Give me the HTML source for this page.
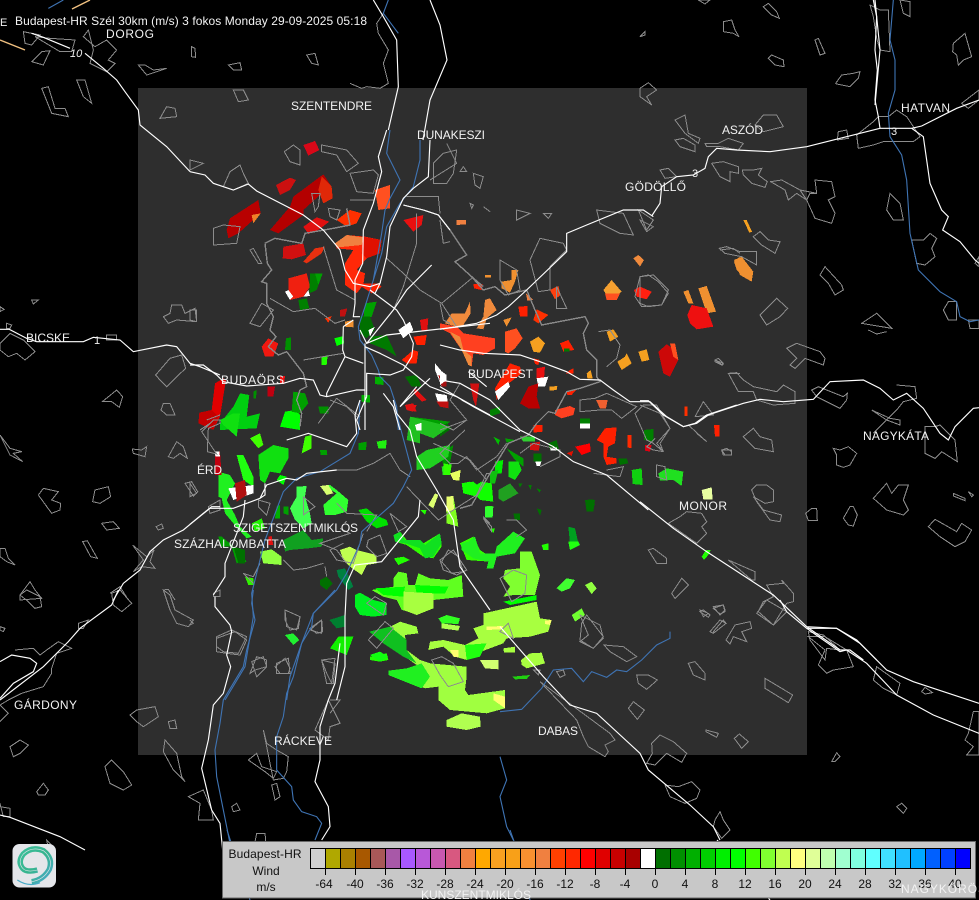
<!DOCTYPE html>
<html><head><meta charset="utf-8"><title>Budapest-HR</title>
<style>
html,body{margin:0;padding:0;background:#000;width:979px;height:900px;overflow:hidden}
svg{display:block;position:absolute;left:0;top:0}
svg *{vector-effect:non-scaling-stroke}
.g{fill:none;stroke:#8c8c8c;stroke-width:1;shape-rendering:crispEdges}
.g2{fill:none;stroke:#8a8a8a;stroke-width:1.4;shape-rendering:crispEdges}
.w{fill:none;stroke:#fff;stroke-width:1.15}
.b{fill:none;stroke:#3f74b4;stroke-width:1.1}
.r path{shape-rendering:crispEdges}
text{font-family:"Liberation Sans",sans-serif;font-size:12px;fill:#f2f2f2}
.k{fill:#111;font-size:12px}
</style></head><body>
<svg width="979" height="900" viewBox="0 0 979 900">
<rect width="979" height="900" fill="#000"/>
<rect x="138" y="88" width="669" height="667" fill="#2e2e2e"/>

<!-- radar -->
<g class="r" transform="translate(190,130) scale(.33333)">
<path fill="#d80818" d="M340 45 375 33 388 60 355 77z"/>
<path fill="#cc1010" d="M258 165 300 143 318 150 300 180 270 195z"/>
<path fill="#b40000" d="M240 300 300 230 310 200 400 133 425 170 428 205 400 220 390 195 340 240 340 255 265 310z"/>
<path fill="#e02808" d="M395 140 425 170 428 205 400 220 385 180z"/>
<path fill="#b80000" d="M120 265 205 210 212 250 145 310 115 325 110 300z"/>
<path fill="#f08028" d="M185 255 212 250 190 280z"/>
<path fill="#e01010" d="M340 290 380 262 418 275 385 300 355 312z"/>
<path fill="#ff3000" d="M440 270 480 240 515 250 500 280 470 290z"/>
<path fill="#ff5020" d="M555 180 600 165 600 235 565 240z"/>
<path fill="#e81010" d="M640 270 700 255 695 285 670 305z"/>
<path fill="#f08040" d="M800 270 828 270 828 283 800 285z"/>
<path fill="#ff2808" d="M435 340 470 315 525 320 575 330 570 370 530 385 500 420 525 430 520 465 500 490 465 465 465 400 490 360 440 355z"/>
<path fill="#e01000" d="M520 320 575 330 570 370 530 385 515 370z"/>
<path fill="#f08040" d="M435 340 470 315 520 322 515 345 445 352z"/>
<path fill="#ff2000" d="M500 460 560 460 575 470 545 490z"/>
<path fill="#d01010" d="M280 350 340 340 348 375 305 388 278 385z"/>
<path fill="#e83010" d="M340 395 375 355 405 350 395 370 350 400z"/>
<path fill="#f02010" d="M295 445 350 430 360 470 340 500 300 510 295 470z"/>
<path fill="#fff" d="M285 485 300 510 310 500 295 480zM340 500 355 480 360 498z"/>
<path fill="#008000" d="M360 430 398 430 380 480 358 490z"/>
<path fill="#00a000" d="M375 430 398 430 385 465z"/>
<path fill="#008000" d="M325 510 350 505 358 535 330 540z"/>
<path fill="#009000" d="M288 625 303 622 303 660 285 660z"/>
<path fill="#f01810" d="M215 650 235 625 265 640 250 680 225 680z"/>
<path fill="#00ff00" d="M433 625 460 618 462 640 440 648z"/>
<path fill="#20ff00" d="M395 682 413 675 410 705 395 705z"/>
<path fill="#ff3000" d="M405 565 425 558 415 578z"/>
<path fill="#c01010" d="M450 540 472 535 465 560 450 560z"/>
<path fill="#f09030" d="M465 575 490 570 490 592 465 590z"/>
<path fill="#00a000" d="M525 520 560 515 545 560 520 570z"/>
<path fill="#007000" d="M510 560 540 560 555 600 530 625 510 610z"/>
<path fill="#007a00" d="M540 620 590 615 620 680 590 660 540 640z"/>
<path fill="#fff" d="M625 600 660 575 670 600 640 625zM535 600 555 590 540 620z"/>
<path fill="#e01010" d="M690 570 715 565 712 600 695 605z"/>
<path fill="#ff2000" d="M670 620 710 615 705 645 680 645zM635 690 670 660 685 665 680 700 650 700z"/>
<path fill="#fff" d="M735 700 752 720 770 760 755 770 735 720z"/>
<path fill="#a81010" d="M745 735 770 745 770 770 755 770z"/>
<path fill="#007000" d="M645 740 680 735 695 770 665 770z"/>
<path fill="#e01010" d="M675 775 710 810 695 815 672 790z"/>
<path fill="#fff" d="M735 790 770 795 775 825 745 820z"/>
<path fill="#c01010" d="M740 815 775 815 775 835 750 830z"/>
<path fill="#e81010" d="M650 825 680 825 670 845 650 840z"/>
<path fill="#00a000" d="M660 860 780 875 750 900 660 900z"/>
<path fill="#fff" d="M675 885 700 880 695 900 675 900z"/>
<path fill="#e00000" d="M75 760 100 745 108 750 90 860 70 900 25 880 28 848 65 840z"/>
<path fill="#c40000" d="M28 848 65 840 85 860 70 900 25 880z"/>
<path fill="#c00010" d="M232 770 255 770 250 800 232 800z"/>
<path fill="#f01010" d="M270 740 285 738 282 762 270 762z"/>
<path fill="#00d010" d="M90 880 130 830 150 790 178 795 170 860 210 850 200 895 90 900z"/>
<path fill="#00ff00" d="M270 890 285 845 315 840 330 855 330 900z"/>
<path fill="#00a000" d="M310 785 345 790 355 820 330 850 305 845z"/>
<path fill="#009000" d="M385 830 415 830 415 850 390 850z"/>
<path fill="#00b000" d="M515 795 540 795 540 818 515 815zM555 740 580 742 580 765 555 762z"/>
<path fill="#009000" d="M190 785 200 780 198 805 190 805z"/>
</g>
<g class="r" transform="translate(440,210) scale(.33333)">
<path fill="#f08040" d="M52 30 78 30 78 43 52 43z"/>
<path fill="#ff2000" d="M100 222 128 222 125 240 102 235z"/>
<path fill="#f09030" d="M135 195 153 195 153 203 135 203z"/>
<path fill="#f09030" d="M185 215 215 210 215 180 235 180 225 215 210 248 185 235z"/>
<path fill="#f08a3c" d="M15 340 35 310 75 310 90 275 92 310 70 345 50 350zM110 355 130 320 135 270 150 265 170 300 140 325 130 358z"/>
<path fill="#ff4020" d="M0 340 50 350 70 370 165 385 165 415 130 435 100 430 95 470 85 465 65 420 30 370 0 355z"/>
<path fill="#f08a3c" d="M30 365 60 380 70 420 95 440 95 470 85 465 65 420z"/>
<path fill="#f09030" d="M190 330 215 322 200 350z"/>
<path fill="#ff5020" d="M195 365 230 355 248 385 225 415 205 430 195 425z"/>
<path fill="#ff2000" d="M235 290 262 288 262 320 240 320z"/>
<path fill="#f08040" d="M258 250 280 270 262 272z"/>
<path fill="#ff3000" d="M290 298 325 315 295 340 280 330z"/>
<path fill="#ff4010" d="M330 240 355 228 362 255 345 268z"/>
<path fill="#f5a020" d="M270 395 295 380 315 400 300 428 280 425z"/>
<path fill="#ff2000" d="M360 400 385 390 403 420 370 425z"/>
<path fill="#007a00" d="M372 415 388 415 388 425 372 425z"/>
<path fill="#f5a030" d="M490 240 515 210 545 245 530 255 500 255z"/>
<path fill="#ff5020" d="M495 250 540 250 530 270 500 270z"/>
<path fill="#ff2010" d="M582 240 600 230 635 245 620 268 590 260z"/>
<path fill="#f08a3c" d="M580 145 595 135 612 150 600 170z"/>
<path fill="#f09030" d="M730 245 745 240 760 280 745 280zM775 235 800 228 828 305 800 310z"/>
<path fill="#ee1010" d="M742 315 755 285 800 295 820 350 770 358 750 340z"/>
<path fill="#f09030" d="M882 155 900 140 900 190 890 180z"/>
<path fill="#f5a020" d="M500 365 520 358 535 380 510 395zM532 455 555 440 560 430 575 460 545 480zM595 425 620 418 628 450 605 455z"/>
<path fill="#cc0808" d="M655 425 680 403 705 420 715 450 690 500 670 490z"/>
<path fill="#ff5020" d="M690 400 705 400 715 450 700 440z"/>
<path fill="#f5a020" d="M440 490 452 480 458 505 442 505z"/>
<path fill="#fff" d="M0 480 20 495 20 510 0 525z"/>
<path fill="#d01010" d="M90 520 118 520 108 590 100 570z"/>
<path fill="#ff2000" d="M165 535 210 460 240 470 245 490 200 525 170 570z"/>
<path fill="#fff" d="M165 545 205 515 210 530 175 570z"/>
<path fill="#e81010" d="M290 475 315 470 312 505 290 505z"/>
<path fill="#fff" d="M290 505 325 500 315 530 295 530z"/>
<path fill="#b80000" d="M240 580 265 530 295 520 290 560 300 595 265 595z"/>
<path fill="#f5a020" d="M328 530 352 528 350 540 328 542z"/>
<path fill="#ff4020" d="M345 600 390 588 405 595 400 615 365 625 345 615z"/>
<path fill="#ff2000" d="M380 545 408 540 395 555 382 555zM390 480 400 475 400 490 378 490zM280 445 300 450 295 465 285 462z"/>
<path fill="#f06030" d="M468 570 503 570 498 595 480 595z"/>
<path fill="#fff" d="M420 640 450 635 450 655 420 655z"/>
<path fill="#008000" d="M420 625 450 625 450 640 420 640z"/>
<path fill="#ff2000" d="M495 655 530 652 525 700 505 710 500 740 530 745 530 760 500 765 490 740 490 700 470 690z"/>
<path fill="#ff0000" d="M405 710 450 700 452 725 425 735z"/>
<path fill="#ff2a00" d="M562 675 575 675 575 715 562 712z"/>
<path fill="#008000" d="M612 660 640 657 640 695 612 690z"/>
<path fill="#e00010" d="M615 705 635 705 630 725 615 722z"/>
<path fill="#e01000" d="M380 730 400 722 395 738z"/>
<path fill="#007000" d="M535 745 560 745 565 760 540 765z"/>
<path fill="#10d010" d="M575 780 605 775 608 825 578 822z"/>
<path fill="#20e020" d="M655 790 680 775 730 785 725 828 700 810 660 812z"/>
<path fill="#ff3000" d="M733 590 743 590 743 618 733 618z"/>
<path fill="#ff2000" d="M822 645 838 645 838 680 825 680z"/>
<path fill="#e8ffa0" d="M785 840 815 832 818 868 790 868z"/>
<path fill="#007000" d="M0 650 20 640 35 655 0 680z"/>
<path fill="#009000" d="M0 730 40 705 30 760 10 765z"/>
<path fill="#20e020" d="M5 770 35 760 30 790 8 795z"/>
<path fill="#e8ff60" d="M30 790 62 780 58 812 40 810z"/>
<path fill="#008000" d="M150 600 180 590 180 610 150 620z"/>
<path fill="#00c000" d="M160 680 180 690 175 705z"/>
<path fill="#00a000" d="M195 685 225 690 200 698z"/>
<path fill="#30d030" d="M240 680 285 680 285 695 250 695z"/>
<path fill="#007000" d="M325 700 350 690 358 722 330 720z"/>
<path fill="#fff" d="M330 712 352 712 350 722 332 722zM285 752 305 752 300 768 290 768z"/>
<path fill="#00a000" d="M200 715 250 745 250 770 225 750z"/>
<path fill="#00f000" d="M165 755 190 750 185 790 165 790z"/>
<path fill="#10e010" d="M205 755 235 755 245 780 225 810 205 800z"/>
<path fill="#10c010" d="M150 785 175 780 165 820 150 820z"/>
<path fill="#10ff00" d="M65 820 90 815 100 830 125 815 155 820 160 875 120 870 100 850 70 840z"/>
<path fill="#20a020" d="M175 840 210 820 235 850 190 875 175 865z"/>
<path fill="#007000" d="M280 730 305 730 305 755 280 755z"/>
<path fill="#008000" d="M235 820 248 820 240 832zM265 825 275 825 272 840zM290 835 303 840 298 848z"/>
<path fill="#006f00" d="M435 870 460 868 465 885 445 898z"/>
<path fill="#ddff80" d="M20 860 40 858 42 900 20 900z"/>
<path fill="#20ff00" d="M140 888 158 888 158 900 140 900z"/>
<path fill="#d01010" d="M270 700 300 695 297 722 270 720z"/>
<path fill="#ff2000" d="M280 645 308 645 308 665 280 668z"/>
</g>
<g class="r" transform="translate(190,400) scale(.33333)">
<path fill="#10e010" d="M90 60 130 40 150 40 140 110 100 75z"/>
<path fill="#40ff00" d="M180 115 210 100 220 135 205 145z"/>
<path fill="#10e010" d="M205 165 250 135 295 145 295 175 270 220 240 215 225 250 210 240z"/>
<path fill="#20ff10" d="M140 165 160 165 190 230 190 260 160 240z"/>
<path fill="#00ff00" d="M270 225 290 230 280 255 260 240z"/>
<path fill="#20f020" d="M85 215 120 225 135 250 110 300 135 345 150 380 185 410 170 415 130 370 105 340 95 295 85 290z"/>
<path fill="#fff" d="M115 265 190 255 190 280 130 300z"/>
<path fill="#b01010" d="M135 250 165 240 170 285 140 305z"/>
<path fill="#c00010" d="M75 160 90 155 95 225 75 225z"/>
<path fill="#fff" d="M75 155 88 155 90 170 76 170z"/>
<path fill="#40ff00" d="M345 110 365 105 365 145 335 160z"/>
<path fill="#00a000" d="M390 150 410 150 412 165 392 165zM505 130 530 125 528 150 505 150z"/>
<path fill="#20f010" d="M560 125 590 120 588 145 565 145z"/>
<path fill="#e01010" d="M645 15 670 10 680 35 650 30z"/>
<path fill="#20c020" d="M660 50 780 80 730 115 690 100 690 130 650 120z"/>
<path fill="#fff" d="M675 75 695 68 695 92 680 92z"/>
<path fill="#20d020" d="M680 170 710 150 780 135 775 170 720 205 680 210z"/>
<path fill="#30ff00" d="M760 190 785 195 780 225 760 225z"/>
<path fill="#e8ff60" d="M785 220 810 210 805 240 790 240z"/>
<path fill="#10ff00" d="M815 250 850 245 880 270 900 265 900 300 880 300 860 290 820 280z"/>
<path fill="#40ff00" d="M890 325 900 320 900 350 885 350z"/>
<path fill="#40ff50" d="M320 260 350 258 345 290 360 340 365 370 340 385 315 360 300 325 320 290z"/>
<path fill="#00b000" d="M260 320 270 315 270 355 255 355z"/>
<path fill="#00a000" d="M280 320 295 320 295 345 280 340z"/>
<path fill="#30ff30" d="M400 315 440 280 415 265 395 260 420 255 440 270 475 300 470 335 435 345 405 345z"/>
<path fill="#d8ff70" d="M390 258 415 255 430 280 410 285z"/>
<path fill="#00e000" d="M505 330 530 325 555 345 590 360 595 375 560 385 530 365z"/>
<path fill="#20f000" d="M185 370 215 355 225 385 195 395z"/>
<path fill="#10a020" d="M280 420 340 390 365 420 400 415 395 440 355 445 300 450 285 455z"/>
<path fill="#00a000" d="M85 410 95 410 125 435 170 485 140 490 125 440 95 440z"/>
<path fill="#90ff40" d="M210 455 245 448 275 470 275 495 220 490z"/>
<path fill="#c0ff50" d="M450 450 480 440 500 450 560 465 560 490 530 495 515 525 480 500 460 480z"/>
<path fill="#008040" d="M440 510 465 505 490 560 475 570 445 530z"/>
<path fill="#007000" d="M390 540 410 530 428 550 410 570 390 555z"/>
<path fill="#30ff00" d="M610 405 630 395 650 420 700 430 750 400 755 440 730 475 700 470 650 435 615 425z"/>
<path fill="#20ff00" d="M612 475 640 470 660 480 625 495zM690 330 710 330 705 345zM540 770 590 760 595 780 570 785 540 780z"/>
<path fill="#ddff70" d="M715 315 735 280 745 285 730 325z"/>
<path fill="#80ff20" d="M770 290 790 288 800 345 805 380 770 370z"/>
<path fill="#e8ff70" d="M770 290 790 288 792 330 768 335z"/>
<path fill="#30ff00" d="M810 430 850 410 870 450 900 470 900 485 830 480z"/>
<path fill="#30f000" d="M165 530 190 535 190 555 175 555z"/>
<path fill="#20f030" d="M285 705 310 700 328 720 310 735z"/>
<path fill="#008030" d="M418 660 465 645 465 680 440 685z"/>
<path fill="#10f000" d="M445 710 490 710 470 765 420 745z"/>
<path fill="#e01010" d="M235 410 245 408 250 435 235 435z"/>
<path fill="#007000" d="M130 440 165 450 165 490 145 490z"/>
</g>
<g class="r" transform="translate(330,500) scale(.33333)">
<path fill="#60ff20" d="M125 270 190 260 190 235 205 215 230 220 235 255 255 255 265 220 300 235 355 240 395 225 400 290 355 295 310 300 310 325 260 340 215 330 200 300 160 290z"/>
<path fill="#00ff00" d="M135 265 225 260 220 290 160 285zM255 255 355 260 345 280 260 280z"/>
<path fill="#a8ff40" d="M220 275 310 280 310 325 260 345 220 330z"/>
<path fill="#00f020" d="M75 285 90 278 130 300 170 310 170 345 130 350 90 345 75 320z"/>
<path fill="#10e020" d="M190 105 210 95 225 120 270 120 285 135 330 100 335 130 310 170 285 175 270 145 225 130 195 125z"/>
<path fill="#20f020" d="M395 130 415 125 435 110 450 160 495 160 500 140 550 95 585 115 555 160 500 170 490 205 470 205 475 185 430 175 395 150z"/>
<path fill="#80ff30" d="M525 210 570 205 570 155 605 155 630 225 615 285 550 285 520 290 540 260 520 235z"/>
<path fill="#00ff00" d="M520 305 620 285 620 300 540 315z"/>
<path fill="#a8ff40" d="M460 340 620 305 630 355 665 360 655 395 600 410 530 415 520 430 440 460 410 480 375 470 340 440 295 450 300 425 340 420 405 435 445 415 430 385 460 375z"/>
<path fill="#ffff70" d="M470 380 520 378 515 388 470 390zM645 362 665 360 660 375 645 372zM360 450 385 450 385 472 370 470z"/>
<path fill="#20ff10" d="M405 435 470 430 450 470 410 480z"/>
<path fill="#a0ff40" d="M118 395 180 380 210 365 260 380 265 400 225 405 230 450 270 480 300 490 410 500 410 530 405 570 415 585 525 570 525 625 470 640 360 630 325 600 325 560 285 565 175 525 175 512 230 505 260 495 210 460 160 430z"/>
<path fill="#10c020" d="M118 395 180 380 230 420 230 450 260 490 220 470 160 430z"/>
<path fill="#20f020" d="M175 512 230 505 275 490 300 530 275 565 175 525z"/>
<path fill="#ffff70" d="M490 580 525 590 525 625 490 600z"/>
<path fill="#b0ff50" d="M350 660 395 640 450 650 452 680 410 690 350 680z"/>
<path fill="#30ff20" d="M325 355 350 345 390 355 385 372 335 370z"/>
<path fill="#b0ff50" d="M335 370 390 378 385 392 335 385z"/>
<path fill="#d0ff70" d="M450 480 505 480 505 508 465 505z"/>
<path fill="#10ff10" d="M120 465 150 455 175 470 150 485z"/>
<path fill="#a8ff40" d="M573 480 600 460 635 458 645 490 590 505 575 495zM520 445 555 440 555 458 522 458z"/>
<path fill="#20d010" d="M548 530 600 525 590 537 555 538z"/>
<path fill="#40ff30" d="M680 265 710 235 735 240 720 265 695 275z"/>
<path fill="#90ff40" d="M765 255 785 245 800 265 785 282z"/>
<path fill="#70ff30" d="M725 345 755 325 765 345 735 365z"/>
<path fill="#20ff00" d="M635 135 655 130 655 150 640 150zM480 85 495 85 490 100z"/>
<path fill="#00a020" d="M715 80 735 85 745 130 720 130z"/>
<path fill="#20ff10" d="M715 125 745 125 750 135 720 150z"/>
<path fill="#30ff30" d="M465 20 490 20 488 52 465 52z"/>
<path fill="#007000" d="M550 40 570 40 570 60 555 62zM620 25 635 30 630 47zM765 0 795 0 790 35 770 35z"/>
</g>
<g class="r" transform="translate(640,0) scale(.33333)">
<path fill="#f5a020" d="M310 660 320 660 336 695 328 698z"/>
<path fill="#f09030" d="M282 780 305 770 340 815 335 845 300 825z"/>
</g>
<g class="r" transform="translate(640,330) scale(.33333)">
<path fill="#20ff00" d="M185 680 198 660 212 660 205 675 192 690z"/>
</g>

<!-- settlements / boundaries -->
<g class="g" transform="scale(.33333)">
<path d="M70 95 75 130 95 135 120 105zM105 110 150 115 225 120 215 155 180 155zM125 155 150 152 130 195 95 185zM265 90 250 110 285 140 320 120 350 150 325 180 345 190 320 215 270 190 280 150zM230 240 255 240 275 310 250 290zM125 265 145 260 165 325 195 325 205 350 155 340zM415 195 435 195 460 210 500 205 440 225zM575 140 585 145 587 172 575 170zM685 195 720 188 725 210 700 210zM920 165 945 160 955 195 935 190zM500 320 525 325 530 350 480 355zM700 270 730 270 745 300 715 305zM1050 250 1085 265 1100 260 1140 265 1165 250 1150 190 1165 150 1135 100 1130 70 1150 40"/>
</g>
<g class="g" transform="translate(190,130) scale(.33333)">
<path d="M283 65 310 45 330 60 330 105 300 95zM395 45 470 60 505 100 470 125 440 75 395 65zM120 125 150 105 160 130 175 160 130 180 100 170zM0 90 40 100 0 120zM480 130 550 120 565 135 550 190 500 185zM70 295 100 285 150 290 140 340 70 345zM180 360 190 355 215 400 205 400zM415 235 450 240 440 270 420 260zM365 190 390 190 385 230 375 245zM730 160 770 160 790 130 800 60 760 70 730 100zM820 110 830 125 810 125zM850 130 880 140 870 175 855 165zM840 220 850 225 845 235zM880 230 900 245M0 540 20 540 20 575 0 570zM215 520 250 540 210 590 180 580zM590 385 640 430 690 480 755 520 845 445M755 520 800 590M680 250 680 340 640 470 610 540M240 505 310 545 375 535 435 580 465 570M400 350 440 480 495 510M340 690 400 680 460 670M440 805 510 860M385 880 440 805M50 870 90 855M60 880 30 900M720 150 800 100 770 40M650 200 745 200 750 250"/>
</g>
<g class="g2" transform="translate(190,130) scale(.33333)">
<path d="M225 340 255 325 335 340 345 310 430 295 480 285 470 235M225 340 232 400 245 420 215 455 230 460 230 520 250 560 240 600 258 620 235 650 265 675 290 665 340 730 350 770 330 780 320 810 335 850 330 890M640 225 700 240 745 255 780 300 830 375 795 395 845 440 880 470M480 210 550 210"/>
</g>
<g class="g2" transform="translate(440,210) scale(.33333)">
<path d="M80 135 45 155M95 200 130 240 165 230 195 255 260 240 285 300 305 345 435 320 445 340 430 370 440 420 470 450 470 500 480 515 420 535 380 545 345 610 325 605 290 640 265 675 205 700 150 790 95 885 60 895"/>
</g>
<g class="g" transform="translate(440,210) scale(.33333)">
<path d="M270 150 300 85 370 100 380 120 330 170 330 240 295 245zM180 150 230 180 240 240 205 255 180 210zM350 230 380 295 350 295zM600 200 640 195 685 240 665 285 605 290 585 260zM840 120 880 115 900 130M825 450 850 460 845 465 825 455zM865 490 900 490M845 720 875 720 875 735 850 735zM585 610 610 585 650 585 690 655 650 700 670 725 640 700 620 690zM420 570 465 565 500 550 590 590 545 625 515 600 480 600 420 605zM230 0 270 10 230 30zM310 10 335 10 325 25zM470 0 550 10 580 75 540 70 480 40zM595 0 640 30 620 60zM475 365 510 360 540 405 530 445 500 470M0 30 10 100 30 95M0 280 10 330 30 340M75 660 0 730 30 760 55 760 80 740 110 780 170 740 200 700M460 790 540 800 550 770 500 780M240 730 280 700 360 720 360 740 300 770M0 510 60 520 30 570 80 630 40 660 0 640"/>
</g>
<g class="g" transform="translate(190,400) scale(.33333)">
<path d="M285 630 330 650 320 690 290 680zM360 690 395 660 395 700zM185 785 220 770 230 800 200 830zM260 790 295 775 300 820 260 820zM395 780 435 775 425 850 410 820zM80 710 125 690 170 710 145 760 100 755 80 740zM535 420 570 405 590 460 560 470 530 440zM340 290 375 320 340 345zM600 340 650 380 625 395zM750 480 790 450 830 510 800 525 760 510zM205 300 240 310 230 345 205 320zM0 250 20 280 0 290zM405 500 410 530M440 210 500 210 550 190 600 160 630 210 660 230M650 260 745 360 790 330 860 285 890 220 900 220M530 395 560 345 470 340 440 310M450 385 480 400 390 430 440 450 470 490M280 480 310 510 350 505 400 490M210 490 190 530 160 520 190 550M0 660 10 670 0 675M880 350 900 370M750 90 830 60 780 0M420 0 470 20 500 50M730 130 840 180 890 240"/>
</g>
<g class="g" transform="translate(330,500) scale(.33333)">
<path d="M335 185 355 150 385 170 400 215 365 220zM510 235 550 210 590 225 585 280 545 305zM110 310 135 290 170 310 160 345zM115 420 165 365 190 385 140 445zM305 480 335 470 370 490 400 545 355 560 330 525zM510 395 535 370 550 415zM755 370 770 345 820 410 790 445 750 420zM460 55 485 80 485 95zM40 130 0 150 20 180 70 190 100 100M0 640 30 600 0 600M530 60 560 60 590 90 560 110"/>
</g>
<g class="g" transform="translate(640,0) scale(.33333)">
<path d="M370 20 385 10 410 35 418 55 395 45zM250 65 275 60 285 90 297 110 280 100 250 95zM0 110 15 95 15 105zM525 120 535 115 555 160 540 165zM385 175 395 165 430 180 432 200 405 195zM587 250 605 225 640 220 660 215 655 235 630 260 590 252zM690 15 700 50 710 115 720 150 750 155 745 30 720 30zM780 0 810 5 810 50 790 40zM940 130 975 100 995 170 970 180 955 195 950 165 938 155zM965 310 1017 270 1017 300 985 325zM0 265 25 248 50 270 20 290 35 315 0 290zM105 360 135 345 145 400 180 415 175 430 135 400zM105 420 130 415 165 435 165 455 120 440zM195 430 235 430 265 415 310 430 295 450 240 440 200 440zM345 375 370 345 410 345 430 380 370 395zM215 490 250 485 295 500 295 520 270 515 270 545 240 530zM307 510 340 510 365 505 355 525 382 545 375 562 335 550 310 525zM392 545 425 540 480 570 500 600 470 580 445 600 435 570zM525 540 575 545 585 590 565 600 585 640 575 670 525 655 500 600 510 580 530 580zM340 710 360 695 385 720 420 725 405 760 365 735zM238 745 260 740 300 755 350 755 350 795 305 770 255 760zM0 830 25 825 55 845 85 880 65 915 25 920 0 910zM360 945 410 895 443 925 420 950 380 975zM540 825 555 800 605 855 610 870 585 885 565 850zM740 630 750 580 780 610 790 660 760 660zM815 720 850 720 870 700 890 715 875 745 885 770 855 795 830 790zM910 930 925 905 950 905 950 960 925 960zM665 970 710 940 755 985zM985 960 1017 960 1017 985 990 985zM595 395 620 390 625 415 592 420zM655 445 650 405 700 365 715 350 745 350 770 330 800 350 820 380 840 410 820 425 730 425 700 435zM1005 790 1017 770 1017 800zM60 510 85 505 110 530 75 535zM175 0 210 0 195 12zM0 660 40 680 20 695zM480 570 530 580"/>
</g>
<g class="g" transform="translate(640,330) scale(.33333)">
<path d="M440 55 470 40 540 65 555 85 550 105 495 85 465 115 450 105 470 85zM225 90 235 85 250 100 248 105zM265 130 290 128 310 150 340 170 410 185 430 165 465 185 465 220 400 225 350 210 340 185 295 185zM515 180 535 170 610 200 622 190 620 210 600 235 530 200zM770 165 825 170 830 205 790 215 770 240 745 265 700 310M695 240 750 265 780 270 780 285 740 270zM310 320 340 295 360 320 395 330 400 365 345 355zM245 360 260 355 275 365 275 375 255 375zM855 290 885 290 900 285 945 330 952 395 905 365 885 385 855 370zM580 355 600 360 625 350 650 370 630 405 610 412 590 405 590 375zM700 505 740 460 755 490 775 465 805 465 790 510 805 540 790 555 740 540zM940 490 975 505 975 512 940 498zM985 485 1000 495 995 500zM335 480 350 465 380 465 400 480 400 515 375 520 340 500 370 540 425 555 420 575 390 570 350 515zM497 550 515 535 530 535 532 572 505 572zM610 565 630 530 640 530 652 555 640 588 625 585zM865 590 885 568 950 605 965 580 995 600 975 635 945 650 900 620zM85 580 120 560 140 545 185 550 200 575 185 590 200 610 170 640zM25 660 40 655 80 685 80 700 50 700zM265 690 345 725 345 750 335 750zM95 790 125 745 145 765 105 805zM380 765 430 760 425 750 460 790 460 815 440 820 400 885 355 845 370 815 400 800zM180 845 190 840 210 855 205 862zM220 830 250 825 255 840 240 855zM210 905 240 870 258 880 220 910zM258 930 285 885 330 875 335 895 305 905 320 935 280 920 270 942zM505 905 550 915 600 960 560 955 555 990 510 930zM145 285 200 335 170 310M165 260 220 255 190 215 165 260M0 225 60 250 90 295 60 340 70 365 40 360 20 350 45 325M50 405 75 410 80 450 50 440zM685 0 710 12 740 5"/>
</g>
<g class="g" transform="translate(0,300) scale(.33333)">
<path d="M490 50 510 40 515 15 545 15 555 40 585 25 590 65 530 60 505 70zM0 130 30 100 70 120 105 155 75 180 50 160 25 170 0 150zM20 70 35 75 30 85 20 85zM320 105 350 105 350 120 320 120zM467 225 510 175 545 165 557 205 525 235 500 260 480 240zM307 305 350 270 368 290 358 322 335 305zM490 310 510 310 525 345 500 345 483 330zM505 470 530 425 550 440 562 475 540 460 520 475zM0 405 30 445 65 455 40 460 68 485 30 465zM397 447 425 450 440 440 435 470 400 460zM130 565 175 575 155 600 182 610 180 630 155 640 115 585zM285 570 325 560 332 590 300 610 278 605zM305 670 340 665 358 685 320 690zM248 725 262 722 292 775 272 770zM0 745 15 745 25 775 45 795 20 785 0 770zM60 885 90 845 105 870 125 895 60 900zM555 550 575 545 593 575 580 588zM468 680 485 672 490 685 475 690zM625 620 660 600 660 630 630 640zM398 735 440 770 462 750 450 785 465 805 425 800 400 815 430 780zM605 395 640 360 660 360 660 370 625 385 622 455 650 462zM490 870 505 868 525 900M640 880 660 870 660 890 640 890zM330 880 360 860 385 900M95 0 115 0 100 12zM0 20 12 28 0 35z"/>
</g>
<g class="g" transform="translate(0,590) scale(.33333)">
<path d="M60 15 80 0 120 20 125 50 105 55 85 35zM0 110 15 115 10 125 0 120zM335 10 360 0 395 40 365 65 340 45zM235 100 265 90 250 115 235 115zM45 180 100 175 120 195 140 180 175 155 215 175 170 190 155 235 155 250 130 290 65 310 25 330 0 345M0 345 25 370 0 395M30 470 60 450 85 465 60 490 40 500zM110 605 130 580 145 600 135 615 115 615zM315 530 335 510 370 545 395 585 370 600 330 580zM390 375 410 360 465 350 475 380 430 410 410 395zM505 395 525 390 530 415 510 415zM495 450 530 490 545 560 555 575 520 540 490 485zM490 0 510 15 525 60 580 90 565 110 530 100 510 60zM650 145 705 125 740 150 720 195 680 190 650 185zM750 250 770 200 800 210 800 230 765 240zM825 230 855 205 870 235 865 250 840 250zM855 60 900 80 895 115 870 120 855 90zM930 115 965 90 968 125 950 130zM565 620 610 600 635 660 640 690 595 690 600 640zM745 510 770 490 785 530 830 545 820 565 795 545zM790 420 800 460 830 480 865 500 860 545 850 565 820 570zM815 585 830 580 840 620 825 630zM695 650 710 640 720 660 700 665zM965 210 1005 220 1000 280 980 280zM0 650 30 655 30 680 10 680 0 640zM770 730 795 730 800 780 760 780zM945 420 985 330 1020 400 990 410 985 450zM140 750 160 770 145 775z"/>
</g>
<g class="g" transform="translate(500,600) scale(.33333)">
<path d="M240 45 300 75 310 115 280 145 240 125 265 105zM312 135 370 140 410 170 380 185 330 155zM410 225 445 225 472 240 440 268 415 250zM385 325 400 305 433 330 412 358zM565 190 585 185 615 220 615 240 580 225zM795 235 878 285 865 308 795 265zM618 390 655 400 650 412 618 395zM703 415 718 402 745 425 725 445zM455 430 480 405 520 425 560 460 545 487 500 460 465 495 440 490 457 460zM120 245 230 360 250 410 265 440 315 470 325 455 315 435 345 420 330 400zM495 555 535 560 575 545 600 570 590 595 555 610 510 590zM645 660 660 635 670 660 690 690 665 715 640 680zM995 485 1010 458 1020 470 1005 485zM1190 620 1205 610 1220 625 1210 640zM1265 275 1275 262 1298 278 1275 282zM925 110 975 110 1040 150 1060 200 1000 210 980 220 955 195 975 150zM1130 200 1200 250 1190 285 1150 265 1120 240zM1420 335 1437 335 1437 465 1400 465 1420 440 1395 420 1405 400zM170 215 190 210 195 225 180 232zM100 210 120 210 115 225zM600 30 625 40 610 50zM640 95 670 60 678 70 640 100zM640 25 670 15 675 35 660 42zM770 40 800 0 860 35 820 75z"/>
</g>

<!-- rivers -->
<g class="b" transform="scale(.33333)">
<path d="M1165 0 1150 40 1195 100M145 25 190 0"/>
</g>
<g class="b" transform="translate(190,130) scale(.33333)">
<path d="M600 0 590 70 630 150 600 205 585 240 575 310 550 450 525 530 505 590 510 630 545 675 565 720 570 740 600 770 620 830 625 900M690 30 690 90 670 170 630 220 590 290 575 370 550 450"/>
</g>
<g class="b" transform="translate(190,400) scale(.33333)">
<path d="M610 0 625 60 665 210 640 260 610 310 570 345 515 395 510 430 470 520 440 570 370 640 365 680 335 730 300 830 290 900M510 0 505 100 480 160 390 215 320 235 280 275 225 420 185 580 190 650 165 800 105 900"/>
</g>
<g class="b" transform="translate(0,590) scale(.33333)">
<path d="M760 0 755 40 765 90 740 180 730 230 670 330 660 400 645 480 650 560 690 760M1005 0 940 70 905 160 880 260 860 310 850 380 830 440 830 540 875 590 880 630 905 665 950 680 965 700 945 750"/>
</g>
<g class="b" transform="translate(640,0) scale(.33333)">
<path d="M760 0 750 120 765 180 765 270 745 340 750 410 785 465 800 540 810 700 835 810 900 875 950 905 960 950 990 965 1017 960"/>
</g>
<g class="b" transform="translate(500,600) scale(.33333)">
<path d="M0 335 65 328 125 265 160 210 215 205 250 245 275 215 320 232 350 210 380 215 425 180 470 135 510 115 510 95M0 470 20 540 0 590 20 680 40 720"/>
</g>
<path class="b" d="M510 830 520 858 530 900M227 830 240 870 250 900"/>
<path d="M72 9 90 0M0 40 25 50" fill="none" stroke="#f0c080" stroke-width="1.4"/>

<!-- roads -->
<g class="w" transform="scale(.33333)">
<path d="M95 100 130 112 210 145M255 160 310 205 350 240 375 275 415 330 420 375 500 440 570 515M1120 0 1150 50 1190 120 1195 260 1165 390"/>
</g>
<g class="w" transform="translate(190,130) scale(.33333)">
<path d="M0 125 45 135 70 160 130 180 175 162 200 183 340 255 400 300 450 360 465 420 490 460 540 470 570 460 555 490M590 0 565 80 575 125 550 220 520 300 518 400 495 450 495 520 490 560 510 560M720 30 715 140 670 175 640 205 600 290 590 380 570 460M640 225 700 240 745 255 780 300M540 480 620 540 640 570 670 640 665 680 640 720 600 735 530 730 530 800M510 600 530 640 590 615 900 580M525 650 570 670 640 705 720 770 800 800 890 850M725 405 650 480 610 540 530 640M500 780 525 780M525 640 525 900M460 590 458 660 465 680 520 700M465 680 410 790 410 800M0 705 40 705 80 735 100 755 170 768 280 760 330 745 370 750 390 795 410 800 500 780 525 780M720 745 630 830M680 770 630 830M580 790 610 830 630 900M530 800 500 870 510 900M460 590 490 570M835 725 890 770"/>
</g>
<g class="w" transform="translate(440,210) scale(.33333)">
<path d="M205 290 260 240 380 125 380 70 440 45 550 0 610 0 640 20M205 290 170 315 110 340 50 350 0 358M0 405 60 420 130 430 240 435 300 455 380 485 420 508 480 510 520 540 570 575 630 575 680 620 730 650 765 640 800 615 890 585M0 510 60 520 150 570 240 660 340 710 400 755 500 795 625 900M0 530 100 590 240 665"/>
</g>
<g class="w" transform="translate(640,0) scale(.33333)">
<path d="M35 648 60 610 65 560 110 530 160 525 195 505 205 470 230 445 290 450 390 455 500 440 720 385 815 385 850 410 870 550 905 630 925 650 908 690 960 725 1005 780 1017 790M815 385 845 378 950 325 1017 300M700 0 710 50 705 150 712 210 705 300 715 350 720 385"/>
</g>
<g class="w" transform="translate(640,330) scale(.33333)">
<path d="M0 212 25 212 70 255 130 290 170 280 205 255 310 220 360 208 430 215 520 208 570 155 670 150 720 175 760 210 800 190 850 235 900 310 925 330 945 290 1000 235 1017 233M0 515 100 595 200 665 400 795 500 890 590 895 650 930 710 990M500 890 600 960 630 960 670 990"/>
</g>
<g class="w" transform="translate(500,600) scale(.33333)">
<path d="M840 0 860 35 920 85 1010 85 1080 130 1160 210 1240 245 1437 310M920 85 1020 155 1040 150 1100 190 1190 285 1300 345 1437 400M0 80 130 230 210 315 290 340 420 460 445 510 570 615 640 680 660 720"/>
</g>
<path class="w" d="M717 840 745 870 770 900"/>
<g class="w" transform="translate(0,300) scale(.33333)">
<path d="M0 88 28 88 80 115 110 125 250 125 280 112 360 120 400 155 500 135 530 140 570 190 600 200 660 225M340 900 370 850 420 810 450 755 490 720 550 690 610 640 635 620 660 620"/>
</g>
<g class="w" transform="translate(190,400) scale(.33333)">
<path d="M0 373 60 325 130 325 210 295 230 255 290 235 320 240 350 220 440 210M225 250 225 285 210 295M165 300 160 350 105 490 105 530 70 585M290 120 355 100 470 140 500 100 495 45 510 0M610 0 620 40 660 90 680 170 740 270 790 360 810 500 900 630M690 300 685 350 620 430 575 485 495 495 470 550 465 650 465 800 440 900M815 0 900 45"/>
</g>
<g class="w" transform="translate(0,590) scale(.33333)">
<path d="M645 20 645 50 690 105 695 125 680 195 692 230 670 310 640 345 625 450 605 535 635 660 660 700 668 780M1020 160 1005 280 985 330 960 410 960 510 945 575 985 650 990 710 965 750M0 215 35 195 90 205 110 220 100 245 40 280 0 325M0 330 130 230 205 155 240 115 335 45 355 0M0 675 30 682 180 740 255 780"/>
</g>
<path class="w" d="M423 140 430 100 447 60 440 25 430 0"/>
<path class="w" d="M875 0 880 50 875 105"/>

<!-- labels -->
<text x="15" y="25" textLength="352" lengthAdjust="spacing">Budapest-HR Szél 30km (m/s) 3 fokos Monday 29-09-2025 05:18</text>
<text x="0" y="26" style="font-size:11px">E</text>
<text x="106" y="38" textLength="48">DOROG</text>
<text x="291" y="110" textLength="81">SZENTENDRE</text>
<text x="417" y="139" textLength="68">DUNAKESZI</text>
<text x="722" y="134" textLength="41">ASZÓD</text>
<text x="901" y="112" textLength="49">HATVAN</text>
<text x="625" y="191" textLength="61">GÖDÖLLŐ</text>
<text x="26" y="342" textLength="44">BICSKE</text>
<text x="221" y="384" textLength="63">BUDAÖRS</text>
<text x="468" y="378" textLength="65">BUDAPEST</text>
<text x="863" y="440" textLength="66">NAGYKÁTA</text>
<text x="197" y="474" textLength="25">ÉRD</text>
<text x="679" y="510" textLength="48">MONOR</text>
<text x="233" y="532" textLength="125">SZIGETSZENTMIKLÓS</text>
<text x="174" y="548" textLength="112">SZÁZHALOMBATTA</text>
<text x="14" y="709" textLength="63">GÁRDONY</text>
<text x="274" y="745" textLength="58">RÁCKEVE</text>
<text x="538" y="735" textLength="40">DABAS</text>
<text x="70" y="57" style="font-size:11px;font-style:italic">10</text>
<text x="692" y="177" style="font-size:11px">3</text>
<text x="891" y="135" style="font-size:11px">3</text>
<text x="94" y="344" style="font-size:11px">1</text>

<!-- logo -->
<rect x="12.5" y="844" width="43.5" height="43.5" rx="7" fill="#e4e6ea"/>
<defs><linearGradient id="sw" x1="0" y1="0" x2="1" y2="1"><stop offset="0" stop-color="#3cbf9a"/><stop offset=".5" stop-color="#36b48e"/><stop offset="1" stop-color="#4aa8cc"/></linearGradient></defs>
<g transform="translate(0,830) scale(.33333)" fill="none">
<path d="M52 150Q85 172 120 158" stroke="#45aac6" stroke-width="1.3"/>
<path d="M95 155Q130 150 148 118 160 85 130 62 95 48 70 72 52 95 68 115 80 128 112 120" stroke="url(#sw)" stroke-width="5.5"/>
<path d="M95 155Q130 150 148 118 160 85 130 62 95 48 70 72 52 95 68 115 80 128 112 120" stroke="#e4e6ea" stroke-width=".6"/>
</g>

<!-- legend -->
<rect x="222.5" y="841.5" width="753" height="56.5" fill="#c8c8c8" stroke="#6a6a6a" stroke-width="1"/>
<g shape-rendering="crispEdges">
<rect x="310" y="848" width="15" height="20" fill="#d0d0d0"/><rect x="325" y="848" width="15" height="20" fill="#b0a800"/><rect x="340" y="848" width="15" height="20" fill="#aa8000"/><rect x="355" y="848" width="15" height="20" fill="#a85800"/><rect x="370" y="848" width="15" height="20" fill="#a85858"/><rect x="385" y="848" width="15" height="20" fill="#a858a8"/><rect x="400" y="848" width="15" height="20" fill="#a858ff"/><rect x="415" y="848" width="15" height="20" fill="#b858d8"/><rect x="430" y="848" width="15" height="20" fill="#c858b0"/><rect x="445" y="848" width="15" height="20" fill="#d85880"/><rect x="460" y="848" width="15" height="20" fill="#f08040"/><rect x="475" y="848" width="15" height="20" fill="#ffa800"/><rect x="490" y="848" width="15" height="20" fill="#f8a020"/><rect x="505" y="848" width="15" height="20" fill="#f8a018"/><rect x="520" y="848" width="15" height="20" fill="#f89030"/><rect x="535" y="848" width="15" height="20" fill="#f08040"/><rect x="550" y="848" width="15" height="20" fill="#ff4000"/><rect x="565" y="848" width="15" height="20" fill="#ff2800"/><rect x="580" y="848" width="15" height="20" fill="#ff0000"/><rect x="595" y="848" width="15" height="20" fill="#e00000"/><rect x="610" y="848" width="15" height="20" fill="#c80000"/><rect x="625" y="848" width="15" height="20" fill="#a80000"/><rect x="640" y="848" width="15" height="20" fill="#ffffff"/><rect x="655" y="848" width="15" height="20" fill="#006f00"/><rect x="670" y="848" width="15" height="20" fill="#008f00"/><rect x="685" y="848" width="15" height="20" fill="#00af00"/><rect x="700" y="848" width="15" height="20" fill="#00cf00"/><rect x="715" y="848" width="15" height="20" fill="#00ef00"/><rect x="730" y="848" width="15" height="20" fill="#00ff00"/><rect x="745" y="848" width="15" height="20" fill="#40ff00"/><rect x="760" y="848" width="15" height="20" fill="#80ff30"/><rect x="775" y="848" width="15" height="20" fill="#c0ff50"/><rect x="790" y="848" width="15" height="20" fill="#ffff80"/><rect x="805" y="848" width="15" height="20" fill="#e0ff98"/><rect x="820" y="848" width="15" height="20" fill="#c0ffb0"/><rect x="835" y="848" width="15" height="20" fill="#a0ffd0"/><rect x="850" y="848" width="15" height="20" fill="#80ffe0"/><rect x="865" y="848" width="15" height="20" fill="#60ffff"/><rect x="880" y="848" width="15" height="20" fill="#40e0ff"/><rect x="895" y="848" width="15" height="20" fill="#20c0ff"/><rect x="910" y="848" width="15" height="20" fill="#00a8ff"/><rect x="925" y="848" width="15" height="20" fill="#0060ff"/><rect x="940" y="848" width="15" height="20" fill="#0040ff"/><rect x="955" y="848" width="15" height="20" fill="#0000ff"/>
<path fill="none" stroke="#000" stroke-width="1" d="M310.5 848.5H970.5V868.5H310.5zM325.5 848V868M340.5 848V868M355.5 848V868M370.5 848V868M385.5 848V868M400.5 848V868M415.5 848V868M430.5 848V868M445.5 848V868M460.5 848V868M475.5 848V868M490.5 848V868M505.5 848V868M520.5 848V868M535.5 848V868M550.5 848V868M565.5 848V868M580.5 848V868M595.5 848V868M610.5 848V868M625.5 848V868M640.5 848V868M655.5 848V868M670.5 848V868M685.5 848V868M700.5 848V868M715.5 848V868M730.5 848V868M745.5 848V868M760.5 848V868M775.5 848V868M790.5 848V868M805.5 848V868M820.5 848V868M835.5 848V868M850.5 848V868M865.5 848V868M880.5 848V868M895.5 848V868M910.5 848V868M925.5 848V868M940.5 848V868M955.5 848V868"/>
<path fill="none" stroke="#000" stroke-width="1" d="M325.5 868V875M355.5 868V875M385.5 868V875M415.5 868V875M445.5 868V875M475.5 868V875M505.5 868V875M535.5 868V875M565.5 868V875M595.5 868V875M625.5 868V875M655.5 868V875M685.5 868V875M715.5 868V875M745.5 868V875M775.5 868V875M805.5 868V875M835.5 868V875M865.5 868V875M895.5 868V875M925.5 868V875M955.5 868V875"/>
</g>
<g class="k" text-anchor="middle">
<text class="k" x="265" y="858" textLength="73">Budapest-HR</text>
<text class="k" x="266" y="875">Wind</text>
<text class="k" x="266" y="891">m/s</text>
<text class="k" x="324" y="888">-64</text><text class="k" x="355" y="888">-40</text><text class="k" x="385" y="888">-36</text><text class="k" x="415" y="888">-32</text><text class="k" x="445" y="888">-28</text><text class="k" x="475" y="888">-24</text><text class="k" x="505" y="888">-20</text><text class="k" x="535" y="888">-16</text><text class="k" x="565" y="888">-12</text><text class="k" x="595" y="888">-8</text><text class="k" x="625" y="888">-4</text><text class="k" x="655" y="888">0</text><text class="k" x="685" y="888">4</text><text class="k" x="715" y="888">8</text><text class="k" x="745" y="888">12</text><text class="k" x="775" y="888">16</text><text class="k" x="805" y="888">20</text><text class="k" x="835" y="888">24</text><text class="k" x="865" y="888">28</text><text class="k" x="895" y="888">32</text><text class="k" x="925" y="888">36</text><text class="k" x="955" y="888">40</text>
</g>
<text x="421" y="899" textLength="110">KUNSZENTMIKLÓS</text>
<text x="901" y="893" textLength="85">NAGYKŐRÖS</text>
</svg>
</body></html>
